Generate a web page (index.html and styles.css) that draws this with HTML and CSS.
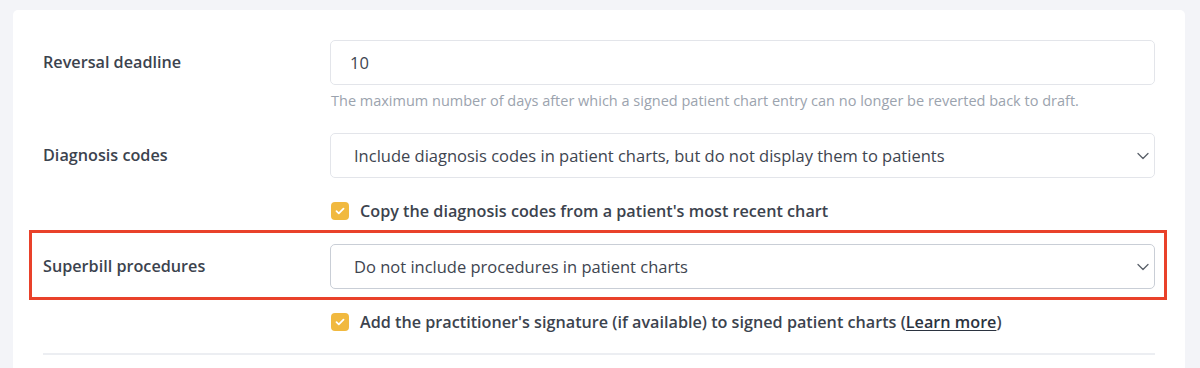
FILE: index.html
```html
<!DOCTYPE html>
<html lang="en">
<head>
<meta charset="utf-8">
<title>Chart settings</title>
<link rel="stylesheet" href="styles.css">
</head>
<body>
<div class="card">
  <div class="row">
    <div class="label">Reversal deadline</div>
    <div class="control">
      <div class="input">10</div>
      <div class="help">The maximum number of days after which a signed patient chart entry can no longer be reverted back to draft.</div>
    </div>
  </div>

  <div class="row row-select">
    <div class="label">Diagnosis codes</div>
    <div class="control">
      <div class="select">
        <span>Include diagnosis codes in patient charts, but do not display them to patients</span>
        <svg class="chev" width="12" height="8" viewBox="0 0 12 8"><path d="M1 1.5 L6 6.5 L11 1.5" fill="none" stroke="#5a606a" stroke-width="1.3" stroke-linecap="round" stroke-linejoin="round"/></svg>
      </div>
    </div>
  </div>

  <div class="row row-check">
    <div class="label"></div>
    <label class="check">
      <span class="box"><svg width="10" height="8" viewBox="0 0 10 8"><path d="M1.5 4.2 L3.8 6.3 L8.5 1.6" fill="none" stroke="#fff" stroke-width="1.8" stroke-linecap="round" stroke-linejoin="round"/></svg></span>
      <span>Copy the diagnosis codes from a patient's most recent chart</span>
    </label>
  </div>

  <div class="highlight">
    <div class="row">
      <div class="label">Superbill procedures</div>
      <div class="control">
        <div class="select select-active">
          <span>Do not include procedures in patient charts</span>
          <svg class="chev" width="12" height="8" viewBox="0 0 12 8"><path d="M1 1.5 L6 6.5 L11 1.5" fill="none" stroke="#5a606a" stroke-width="1.3" stroke-linecap="round" stroke-linejoin="round"/></svg>
        </div>
      </div>
    </div>
  </div>

  <div class="row row-check2">
    <div class="label"></div>
    <label class="check">
      <span class="box"><svg width="10" height="8" viewBox="0 0 10 8"><path d="M1.5 4.2 L3.8 6.3 L8.5 1.6" fill="none" stroke="#fff" stroke-width="1.8" stroke-linecap="round" stroke-linejoin="round"/></svg></span>
      <span>Add the practitioner's signature (if available) to signed patient charts (<a class="link" href="#">Learn more</a>)</span>
    </label>
  </div>

  <hr class="divider">
</div>
</body>
</html>
```

FILE: styles.css
```css
html, body {
  margin: 0;
  padding: 0;
  background: #f3f4f8;
  font-family: "Open Sans", "Noto Sans", sans-serif;
  color: #3c434e;
}

.card {
  margin: 10px 15px 0 13px;
  background: #ffffff;
  border-radius: 5px 5px 0 0;
  padding: 30px 30px 0 30px;
  height: 358px;
  box-sizing: border-box;
  overflow: hidden;
}

.row {
  display: grid;
  grid-template-columns: 287px 1fr;
  align-items: start;
}

.label {
  font-size: 16.2px;
  font-weight: 600;
  line-height: 45px;
  color: #3c434e;
}

.input, .select {
  height: 45px;
  box-sizing: border-box;
  border: 1px solid #e3e5ea;
  border-radius: 5px;
  font-size: 16.5px;
  line-height: 43px;
  color: #3e4550;
  background: #fff;
}

.input {
  padding-left: 19px;
}

.select {
  display: flex;
  align-items: center;
  justify-content: space-between;
  padding: 0 5px 0 23px;
}

.select-active {
  border-color: #c9ced6;
}

.chev {
  display: block;
}

.help {
  margin-top: 7px;
  font-size: 14.5px;
  line-height: 18px;
  color: #9ba3ae;
  padding-left: 1px;
}

.row-select {
  margin-top: 23px;
}

.row-check {
  margin-top: 21px;
  align-items: center;
}

.check {
  display: flex;
  align-items: center;
  gap: 11px;
  font-size: 16.2px;
  font-weight: 600;
  line-height: 24px;
  color: #3c434e;
  padding-left: 1px;
}

.box {
  width: 18px;
  height: 18px;
  border-radius: 4px;
  background: #f1b93f;
  display: flex;
  align-items: center;
  justify-content: center;
  flex: none;
}

.highlight {
  margin: 7px -12px 0 -14px;
  padding: 11px 9px 8px 11px;
  border: 3px solid #e9412a;
}

.row-check2 {
  margin-top: 10px;
}

.link {
  color: #2b3340;
  text-decoration: underline;
  text-underline-offset: 2px;
}

.divider {
  margin: 19px 0 0 0;
  border: 0;
  border-top: 2px solid #eceef2;
}
```
